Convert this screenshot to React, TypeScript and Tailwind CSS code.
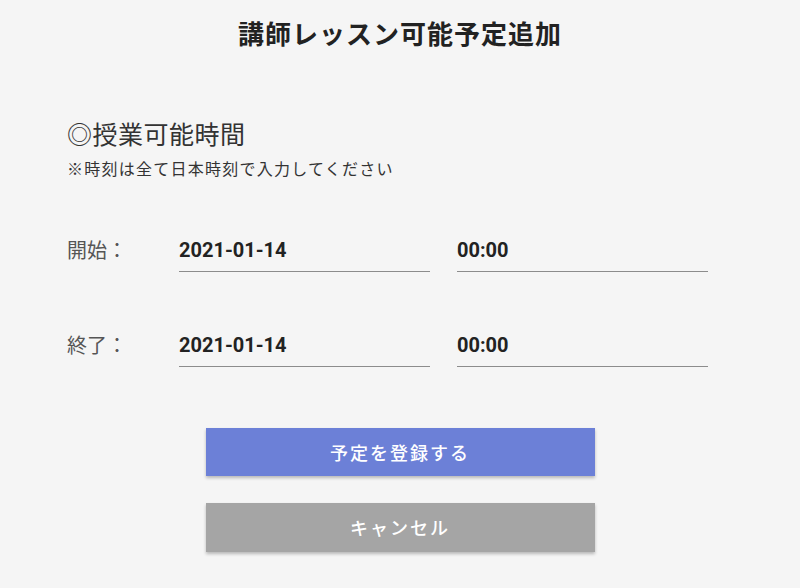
const jp = { fontFamily: '"Noto Sans CJK JP", "Noto Sans", sans-serif' };
const num = { fontFamily: 'Roboto, "Noto Sans CJK JP", sans-serif' };

const Field = ({ value, width }: { value: string; width: string }) => (
  <div className={`${width} border-b border-[#8c8c8c] pb-[11px]`}>
    <div className="text-[20px] font-bold leading-[20px] text-[#222]" style={num}>
      {value}
    </div>
  </div>
);

const Row = ({ label }: { label: string }) => (
  <div className="flex items-start">
    <div className="w-[112px] text-[20px] leading-[20px] text-[#555]" style={jp}>
      {label}
    </div>
    <div className="flex gap-[27px]">
      <Field value="2021-01-14" width="w-[251px]" />
      <Field value="00:00" width="w-[251px]" />
    </div>
  </div>
);

export default function App() {
  return (
    <div className="min-h-screen w-full bg-[#f5f5f5]" style={jp}>
      <h1 className="pt-[18px] text-center text-[26px] font-bold leading-[30px] tracking-[1px] text-[#222]">
        講師レッスン可能予定追加
      </h1>

      <div className="pl-[67px]">
        <h2 className="mt-[72px] text-[25px] leading-[26px] tracking-[0.5px] text-[#333]">
          ◎授業可能時間
        </h2>
        <p className="mt-[13px] text-[16px] leading-[18px] tracking-[1.25px] text-[#333]">
          ※時刻は全て日本時刻で入力してください
        </p>

        <div className="mt-[63px] flex flex-col gap-[63px]">
          <Row label="開始：" />
          <Row label="終了：" />
        </div>
      </div>

      <div className="mt-[61px] flex flex-col items-center gap-[27px]">
        <button className="h-[48px] w-[389px] bg-[#6c80d7] text-[18px] font-medium tracking-[2px] text-white shadow-[0_2px_3px_rgba(0,0,0,0.25)]">
          予定を登録する
        </button>
        <button className="h-[49px] w-[389px] bg-[#a5a5a5] text-[18px] font-medium tracking-[2px] text-white shadow-[0_2px_3px_rgba(0,0,0,0.25)]">
          キャンセル
        </button>
      </div>
    </div>
  );
}
